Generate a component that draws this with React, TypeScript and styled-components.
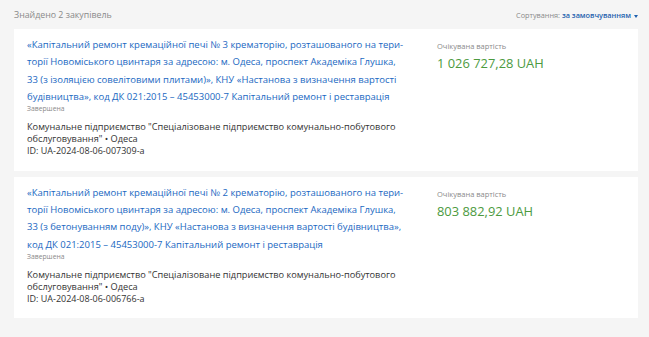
import styled, { createGlobalStyle } from 'styled-components';

const GlobalStyle = createGlobalStyle`
  html, body {
    margin: 0;
    padding: 0;
    background: #f5f5f5;
    font-family: 'Open Sans', 'Noto Sans', sans-serif;
  }
`;

const Page = styled.div`
  padding: 8px 11px 0 14px;
`;

const TopBar = styled.div`
  display: flex;
  justify-content: space-between;
  align-items: center;
  height: 14px;
  margin-bottom: 7px;
  font-size: 8.8px;
  color: #8a8a8a;
`;

const SortLabel = styled.span`
  font-size: 7.3px;
  color: #8a8a8a;
`;

const SortValue = styled.span`
  color: #1d5fae;
  font-weight: 600;
`;

const Caret = styled.span`
  display: inline-block;
  margin-left: 3px;
  width: 0;
  height: 0;
  border-left: 2.5px solid transparent;
  border-right: 2.5px solid transparent;
  border-top: 3px solid #1d5fae;
  vertical-align: middle;
`;

const List = styled.div`
  display: flex;
  flex-direction: column;
  gap: 6px;
`;

const Card = styled.div`
  display: flex;
  background: #fff;
  padding: 7px 13px 13px 13px;
`;

const Main = styled.div`
  width: 379px;
`;

const Title = styled.a`
  display: block;
  font-size: 9.5px;
  line-height: 17.3px;
  color: #1a68c2;
  text-decoration: none;
  hyphens: manual;
`;

const Status = styled.div`
  margin-top: -1px;
  font-size: 6.8px;
  line-height: 10px;
  color: #8a8a8a;
`;

const Org = styled.div`
  margin-top: 7px;
  font-size: 9.2px;
  line-height: 12px;
  color: #333;
`;

const Id = styled.div`
  font-size: 9px;
  line-height: 12.5px;
  color: #333;
`;

const Side = styled.div`
  margin-left: 31px;
  padding-top: 5px;
`;

const PriceLabel = styled.div`
  font-size: 7.5px;
  line-height: 10px;
  color: #8a8a8a;
`;

const Price = styled.div`
  margin-top: 3px;
  font-size: 12.9px;
  line-height: 18px;
  color: #4c9a3e;
`;

type Tender = {
  title: string;
  org: string;
  id: string;
  price: string;
};

const tenders: Tender[] = [
  {
    title:
      '«Капітальний ремонт кремаційної печі № 3 крематорію, розташованого на тери\u00adторії Новоміського цвинтаря за адресою: м. Одеса, проспект Академіка Глушка, 33 (з ізоляцією совелітовими плитами)», КНУ «Настанова з визначення вартості будівництва», код ДК 021:2015 – 45453000-7 Капітальний ремонт і реставрація',
    org: 'Комунальне підприємство "Спеціалізоване підприємство комунально-побутового обслуговування" • Одеса',
    id: 'ID: UA-2024-08-06-007309-a',
    price: '1 026 727,28 UAH',
  },
  {
    title:
      '«Капітальний ремонт кремаційної печі № 2 крематорію, розташованого на тери\u00adторії Новоміського цвинтаря за адресою: м. Одеса, проспект Академіка Глушка, 33 (з бетонуванням поду)», КНУ «Настанова з визначення вартості будівництва», код ДК 021:2015 – 45453000-7 Капітальний ремонт і реставрація',
    org: 'Комунальне підприємство "Спеціалізоване підприємство комунально-побутового обслуговування" • Одеса',
    id: 'ID: UA-2024-08-06-006766-a',
    price: '803 882,92 UAH',
  },
];

export default function App() {
  return (
    <>
      <GlobalStyle />
      <Page>
        <TopBar>
          <span>Знайдено 2 закупівель</span>
          <SortLabel>
            Сортування: <SortValue>за замовчуванням</SortValue>
            <Caret />
          </SortLabel>
        </TopBar>
        <List>
          {tenders.map((t) => (
            <Card key={t.id}>
              <Main>
                <Title href="#">{t.title}</Title>
                <Status>Завершена</Status>
                <Org>{t.org}</Org>
                <Id>{t.id}</Id>
              </Main>
              <Side>
                <PriceLabel>Очікувана вартість</PriceLabel>
                <Price>{t.price}</Price>
              </Side>
            </Card>
          ))}
        </List>
      </Page>
    </>
  );
}
